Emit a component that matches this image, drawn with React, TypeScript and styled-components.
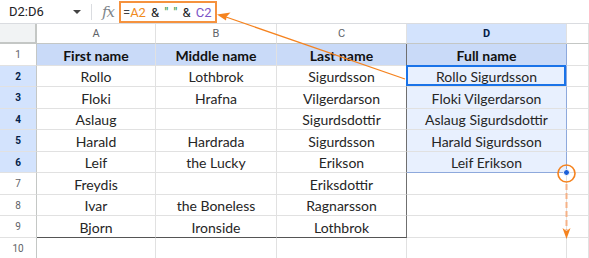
import React from 'react';
import styled, { createGlobalStyle, css } from 'styled-components';

const GlobalStyle = createGlobalStyle`
  html, body { margin: 0; padding: 0; background: #fff; }
  body { font-family: Roboto, "Liberation Sans", Arial, sans-serif; overflow: hidden; }
  * { box-sizing: border-box; }
`;

const Page = styled.div`
  position: relative;
  width: 589px;
  height: 258px;
  overflow: hidden;
  background: #fff;
`;

const FormulaBar = styled.div`
  display: flex;
  align-items: flex-start;
  height: 24px;
  border-bottom: 1px solid #dadce0;
`;

const NameBox = styled.div`
  display: flex;
  align-items: center;
  justify-content: space-between;
  width: 83px;
  height: 23px;
  padding: 0 2px 0 9px;
  font-size: 13px;
  color: #202124;
`;

const Divider = styled.div`
  width: 1px;
  height: 16px;
  margin: 4px 0 0 8px;
  background: #dadce0;
`;

const Fx = styled.div`
  margin-left: 10px;
  width: 16px;
  height: 23px;
  display: flex;
  align-items: center;
  font-family: "DejaVu Serif", "Liberation Serif", serif;
  font-style: italic;
  font-size: 15px;
  color: #80868b;
  letter-spacing: -1px;
`;

const FormulaBox = styled.div`
  margin: 1px 0 0 1px;
  width: 98px;
  height: 22px;
  border: 2px solid #f5923e;
  display: flex;
  align-items: center;
  padding-left: 2px;
  font-size: 13px;
  color: #202124;
  white-space: pre;
  word-spacing: -0.7px;
  overflow: hidden;
`;

const Tok = styled.span<{ $c: string }>`
  color: ${(p) => p.$c};
`;

const Grid = styled.div`
  display: grid;
  grid-template-columns: 37px 119px 121px 130px 160px 1fr;
  grid-template-rows: 20px 22px 21px 22px 21px 22px 21px 22px 21px 22px 21px;
`;

const Corner = styled.div`
  background: #f1f3f4;
  border-right: 2px solid #c4c7c5;
  border-bottom: 2px solid #c4c7c5;
`;

const ColHead = styled.div<{ $sel?: boolean }>`
  display: flex;
  align-items: center;
  justify-content: center;
  font-size: 11px;
  border-right: 1px solid #e1e1e1;
  border-bottom: 1px solid #c4c7c5;
  background: ${(p) => (p.$sel ? '#d3e3fd' : '#fff')};
  color: ${(p) => (p.$sel ? '#041e49' : '#5f6368')};
  font-weight: ${(p) => (p.$sel ? 700 : 400)};
`;

const RowHead = styled.div<{ $sel?: boolean }>`
  display: flex;
  align-items: center;
  justify-content: center;
  font-size: 10px;
  border-right: 1px solid #c4c7c5;
  border-bottom: 1px solid #e1e1e1;
  background: ${(p) => (p.$sel ? '#d3e3fd' : '#fff')};
  color: ${(p) => (p.$sel ? '#041e49' : '#5f6368')};
  font-weight: ${(p) => (p.$sel ? 700 : 400)};
`;

type CellProps = {
  $head?: boolean;
  $sel?: boolean;
  $darkRight?: boolean;
  $darkBottom?: boolean;
  $selRight?: boolean;
  $selBottom?: boolean;
};

const Cell = styled.div<CellProps>`
  position: relative;
  display: flex;
  align-items: center;
  justify-content: center;
  padding-top: 1px;
  font-family: Lato, "Open Sans", sans-serif;
  font-size: 14px;
  color: #262626;
  white-space: nowrap;
  border-right: 1px solid #e1e1e1;
  border-bottom: 1px solid #e1e1e1;
  ${(p) =>
    p.$head &&
    css`
      background: #c9daf8;
      font-weight: 700;
      color: #111;
    `}
  ${(p) =>
    p.$sel &&
    css`
      background: #e8f0fe;
    `}
  ${(p) => p.$darkRight && css`border-right-color: #6f6f6f;`}
  ${(p) => p.$darkBottom && css`border-bottom-color: #555;`}
  ${(p) => p.$selRight && css`border-right-color: #8ea9dc;`}
  ${(p) => p.$selBottom && css`border-bottom-color: #8ea9dc;`}
`;

const ActiveFrame = styled.div`
  position: absolute;
  left: -1px;
  top: -1px;
  right: 0;
  bottom: 0;
  border: 2px solid #1a73e8;
  pointer-events: none;
`;

const Handle = styled.div`
  position: absolute;
  right: -4px;
  bottom: -4px;
  width: 7px;
  height: 7px;
  border-radius: 50%;
  background: #1a5fd8;
  border: 1px solid #fff;
  z-index: 2;
`;

const Overlay = styled.svg`
  position: absolute;
  left: 0;
  top: 0;
  pointer-events: none;
  z-index: 3;
`;

const rows: string[][] = [
  ['First name', 'Middle name', 'Last name', 'Full name'],
  ['Rollo', 'Lothbrok', 'Sigurdsson', 'Rollo Sigurdsson'],
  ['Floki', 'Hrafna', 'Vilgerdarson', 'Floki Vilgerdarson'],
  ['Aslaug', '', 'Sigurdsdottir', 'Aslaug Sigurdsdottir'],
  ['Harald', 'Hardrada', 'Sigurdsson', 'Harald Sigurdsson'],
  ['Leif', 'the Lucky', 'Erikson', 'Leif Erikson'],
  ['Freydis', '', 'Eriksdottir', ''],
  ['Ivar', 'the Boneless', 'Ragnarsson', ''],
  ['Bjorn', 'Ironside', 'Lothbrok', ''],
  ['', '', '', ''],
];

const cols = ['A', 'B', 'C', 'D', ''];

export default function App() {
  return (
    <Page>
      <GlobalStyle />
      <FormulaBar>
        <NameBox>
          <span>D2:D6</span>
          <svg width="8" height="4" viewBox="0 0 8 4">
            <path d="M0 0 L8 0 L4 4 Z" fill="#444" />
          </svg>
        </NameBox>
        <Divider />
        <Fx>fx</Fx>
        <FormulaBox>
          <Tok $c="#3c4043">=</Tok>
          <Tok $c="#f08a1c">A2</Tok>
          <Tok $c="#202124">{'  &  '}</Tok>
          <Tok $c="#1e8e3e">{'"  "'}</Tok>
          <Tok $c="#202124">{'  &  '}</Tok>
          <Tok $c="#7b55c7">C2</Tok>
        </FormulaBox>
      </FormulaBar>
      <Grid>
        <Corner />
        {cols.map((c, i) => (
          <ColHead key={i} $sel={c === 'D'}>
            {c}
          </ColHead>
        ))}
        {rows.map((r, ri) => {
          const rowNo = ri + 1;
          const inSel = rowNo >= 2 && rowNo <= 6;
          return (
            <React.Fragment key={ri}>
              <RowHead $sel={inSel}>{rowNo}</RowHead>
              {r.map((v, ci) => (
                <Cell
                  key={ci}
                  $head={rowNo === 1}
                  $sel={ci === 3 && inSel}
                  $darkRight={ci === 2 && rowNo <= 9}
                  $darkBottom={ci <= 2 && rowNo === 9}
                  $selRight={ci === 3 && rowNo <= 6}
                  $selBottom={ci === 3 && rowNo === 6}
                >
                  {v}
                  {ci === 3 && rowNo === 2 && <ActiveFrame />}
                  {ci === 3 && rowNo === 6 && <Handle />}
                </Cell>
              ))}
              <Cell />
            </React.Fragment>
          );
        })}
      </Grid>
      <Overlay width="589" height="258" viewBox="0 0 589 258">
        <line x1="226" y1="17" x2="405" y2="79" stroke="#f5831f" strokeWidth="1.3" />
        <path d="M217 14.5 L230.5 12.5 L226.5 16.8 L226 20.5 Z" fill="#f5831f" />
        <circle cx="566.5" cy="173.5" r="8.5" fill="none" stroke="#f5831f" strokeWidth="1.6" />
        <line
          x1="566.5"
          y1="184"
          x2="566.5"
          y2="230"
          stroke="#f5b287"
          strokeWidth="2"
          strokeDasharray="6 3"
        />
        <path d="M562.5 228 L566.5 231 L570.5 228 L566.5 239 Z" fill="#f5831f" />
      </Overlay>
    </Page>
  );
}
